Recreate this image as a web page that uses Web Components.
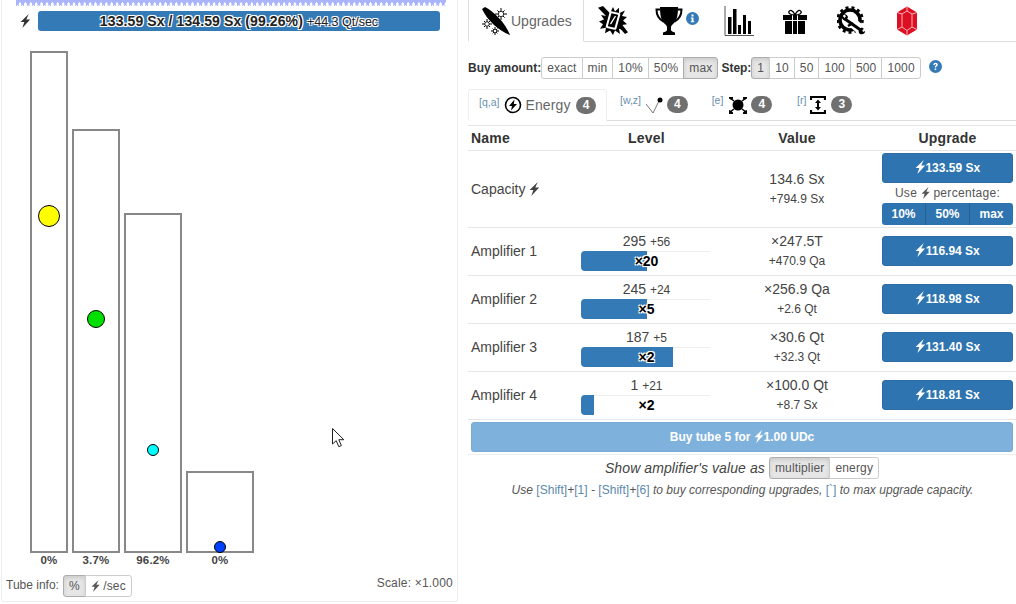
<!DOCTYPE html>
<html>
<head>
<meta charset="utf-8">
<style>
  html, body { margin: 0; height: 100%; background: #fff; overflow: hidden; }
  body { font-family: "Liberation Sans", Arial, sans-serif; font-size: 14px; color: #333; }
  #app { display: flex; width: 1016px; height: 604px; }
</style>
</head>
<body>
<div id="app">
  <tube-panel></tube-panel>
  <upgrade-panel></upgrade-panel>
</div>

<script>
const BOLT = (size = 12, color = 'currentColor') =>
  `<svg width="${size * 0.75}" height="${size}" viewBox="0 0 9 12" style="vertical-align:-2px"><path fill="${color}" d="M7.5 0 .5 6.8h3.2L2 12l6.700-7.200H5.400z"/></svg>`;

const SPARK = (x, y, r) =>
  `<path d="M${x} ${y - r}V${y + r}M${x - r} ${y}H${x + r}M${x - r * .6} ${y - r * .6}L${x + r * .6} ${y + r * .6}M${x + r * .6} ${y - r * .6}L${x - r * .6} ${y + r * .6}" stroke="#000" stroke-width="1" fill="none"/><circle cx="${x}" cy="${y}" r="${r * .45}" fill="#fff" stroke="#000" stroke-width=".8"/>`;

const ICONS = {
  upgrades: `<svg width="30" height="30" viewBox="0 0 30 30"><path d="M1 3 4 1c8 4 20 15 25 28C18 25 6 14 1 3z"/>${SPARK(20, 8, 6)}${SPARK(6, 18, 5)}${SPARK(14, 25, 4)}</svg>`,
  challenges: `<svg width="30" height="29" viewBox="0 0 30 32" preserveAspectRatio="none"><path d="M15 1l2 5 4-4 0 6 6-3-3 6 5 1-4 4 4 4-5 1 3 6-6-2 1 6-5-4-2 5-3-5-5 3 1-6-6 1 3-5-4-3 5-2-3-5 5 1-1-6 5 3z"/><path d="M0 2l8 9 4-3-7-8zM20 22l7 9 3-2-7-10z"/><rect x="9.500" y="6.500" width="11" height="19" rx="1.500" transform="rotate(14 15 16)" fill="#fff"/><rect x="11.500" y="8.500" width="7" height="15" transform="rotate(14 15 16)"/><path d="M12.500 20l5-9" stroke="#fff" stroke-width="1.300"/></svg>`,
  trophy: `<svg width="28" height="30" viewBox="0 0 28 30"><path d="M5 1h18c0 8-1 14-5 17-1 1-2 2-2 3v3c0 1 2 2 4 2.500V29H8v-2.500c2-.5 4-1.500 4-2.500v-3c0-1-1-2-2-3C6 15 5 9 5 1z"/><path d="M5 3.500H1.500c0 6 3 10 7 12M23 3.500h3.500c0 6-3 10-7 12" fill="none" stroke="#000" stroke-width="2"/></svg>`,
  stats: `<svg width="30" height="30" viewBox="0 0 30 30"><path d="M1 0v29.500h29" fill="none" stroke="#555" stroke-width="1"/><path d="M4 11h3.500v17H4zM9 3h3.500v25H9zM14 19h3v9h-3zM19 9h3v19h-3zM24 15h3v13h-3z"/></svg>`,
  gift: `<svg width="24" height="25" viewBox="0 0 24 25" style="margin-top:2px"><path d="M0 6h24v5H0zM2 12h20v13H2z"/><path d="M9.500 6v19M14.500 6v19" stroke="#fff" stroke-width="1"/><path d="M12 6C8 6 5 4.500 6 2.500s4-1.500 6 3.500c2-5 5-5.500 6-3.500S16 6 12 6z" fill="none" stroke="#000" stroke-width="1.300"/></svg>`,
  settings: `<svg width="30" height="30" viewBox="0 0 30 30"><circle cx="13" cy="14" r="10" fill="none" stroke="#000" stroke-width="3.500"/><circle cx="13" cy="14" r="12.500" fill="none" stroke="#000" stroke-width="2.600" stroke-dasharray="3 3"/><path d="M16 17 30 29" stroke="#fff" stroke-width="10"/><path d="M8 13 25 25" stroke="#000" stroke-width="3"/><path d="M5 9c-1 3 1 6 4 5.500l2-3C11 9 8 7.500 6.500 8l2.500 2-1.500 2z"/><path d="M22 27c-1-3 0-5 3-5.500l2 1.500-2 1 1 2 2-1c.5 2-2 4-5 3z"/><path d="M11 20 16 17" stroke="#000" stroke-width="2.500"/></svg>`,
  gem: `<svg width="24" height="30" viewBox="0 0 24 30"><path fill="#dd0f22" d="M12 .5 22 6.500v17L12 29.500 2 23.500v-17z"/><path fill="none" stroke="#f7b0b6" stroke-width="1" d="M12 .5v4.500M7 8l5-3 5 3v13l-5 3.500L7 21zM2 6.500 7 8M22 6.500 17 8M2 23.500 7 21M22 23.500 17 21M12 24.500v5"/></svg>`,
  energy: `<svg width="18" height="18" viewBox="0 0 18 18"><circle cx="9" cy="9" r="7.500" fill="none" stroke="#000" stroke-width="1.600"/><path d="M10.500 3.500 5 10h3l-1 4.500L13 8h-3.200z"/></svg>`,
  amp: `<svg width="17" height="18" viewBox="0 0 17 18"><path d="M0 8l7 9 6-12" fill="none" stroke="#555" stroke-width=".8"/><circle cx="14" cy="4" r="2.500"/></svg>`,
  core: `<svg width="20" height="18" viewBox="0 0 20 18"><circle cx="10" cy="9" r="5.500"/><path d="M1 1h4v1.500L3.500 4 1 2.500zM15 1h4v1.500L16.500 4 15 2.500zM1 14l2.500 1 1.500 1.500V18H1zM16.500 15l2.500-1v4h-4v-1.500z"/><path d="M2 2l4 3M18 2l-4 3M2 16l4-3M18 16l-4-3" stroke="#000" stroke-width="1.500"/></svg>`,
  height: `<svg width="16" height="18" viewBox="0 0 16 18"><path d="M1 4V1h14v3M1 14v3h14v-3" fill="none" stroke="#000" stroke-width="2.200"/><path d="M8 3.500l3 3.500H9v4h2l-3 3.500L5 11h2V7H5z"/></svg>`,
  help: `<svg width="13" height="13" viewBox="0 0 13 13"><circle cx="6.500" cy="6.500" r="6.500" fill="#337ab7"/><path d="M4.300 5c0-1.500 1-2.200 2.300-2.200s2.200.8 2.200 1.900c0 1.500-1.700 1.500-1.700 2.700H5.700c0-1.800 1.500-1.800 1.500-2.600 0-.4-.3-.7-.7-.7s-.8.300-.8.900zM5.700 8.500h1.500V10H5.700z" fill="#fff"/></svg>`,
  info: `<svg width="13" height="13" viewBox="0 0 13 13"><circle cx="6.500" cy="6.500" r="6.500" fill="#337ab7"/><path d="M5.500 2.500h2v2h-2zM4.800 5.500h2.700V9.300h.8v1H4.800v-1h.8V6.500h-.8z" fill="#fff"/></svg>`,
  cursor: `<svg width="14" height="20" viewBox="0 0 14 20"><path d="M.5.500v15.500l3.700-3.300 2.600 6 2.600-1.100-2.600-5.900h5z" fill="#fff" stroke="#222" stroke-width="1"/></svg>`
};

const HALO = '-1px -1px 0 #fff, 1px -1px 0 #fff, -1px 1px 0 #fff, 1px 1px 0 #fff, 0 0 2px #fff';

// segmented button group, used for buy amount, step, tube info and so on
const groupTemplate = document.createElement('template');
groupTemplate.innerHTML = `
<style>
  :host { display: inline-flex; vertical-align: middle; font-size: 12px; font-weight: normal; color: #555; letter-spacing: .15px; }
  ::slotted(*) {
    display: block;
    padding: 1px 5px;
    height: 18px;
    line-height: 18px;
    background: #fff;
    border: 1px solid #ccc;
    margin-left: -1px;
  }
  ::slotted(:first-child) { margin-left: 0; border-radius: 3px 0 0 3px; }
  ::slotted(:last-child) { border-radius: 0 3px 3px 0; }
  ::slotted(.on) { background: #e6e6e6; border-color: #adadad; box-shadow: inset 0 2px 4px rgba(0,0,0,.12); }
</style>
<slot></slot>`;
class BtnGroup extends HTMLElement {
  connectedCallback() {
    if (this.shadowRoot) return;
    this.attachShadow({ mode: 'open' }).appendChild(groupTemplate.content.cloneNode(true));
  }
}
customElements.define('btn-group', BtnGroup);

const tubeTemplate = document.createElement('template');
tubeTemplate.innerHTML = `
<style>
  :host { display: flex; flex-direction: column; align-items: center; }
  .box { box-sizing: border-box; width: 100%; border: 2px solid #888; background: #fff; position: relative; }
  .dot { position: absolute; left: 50%; border-radius: 50%; border: 1px solid #000; box-sizing: border-box; transform: translate(-50%, 50%); }
  .pct { font-size: 11.5px; font-weight: bold; color: #444; line-height: 14px; letter-spacing: .2px; }
</style>
<div class="box"><div class="dot"></div></div>
<div class="pct"></div>`;
class TubeCol extends HTMLElement {
  connectedCallback() {
    if (this.shadowRoot) return;
    this.attachShadow({ mode: 'open' }).appendChild(tubeTemplate.content.cloneNode(true));
    const $ = (s) => this.shadowRoot.querySelector(s);
    this.style.width = this.getAttribute('w') + 'px';
    $('.box').style.height = this.getAttribute('h') + 'px';
    const dot = $('.dot');
    const d = this.getAttribute('d') + 'px';
    dot.style.width = d;
    dot.style.height = d;
    dot.style.bottom = this.getAttribute('level') + 'px';
    dot.style.background = this.getAttribute('color');
    $('.pct').textContent = this.getAttribute('pct');
  }
}
customElements.define('tube-col', TubeCol);

const panelTemplate = document.createElement('template');
panelTemplate.innerHTML = `
<style>
  :host {
    display: flex;
    flex-direction: column;
    position: relative;
    box-sizing: border-box;
    width: 457px;
    height: 602px;
    border: 1px solid #eee;
    border-top: 0;
    border-radius: 0 0 3px 3px;
    margin-left: 1px;
    flex: none;
  }
  .cursor { position: absolute; left: 330px; top: 428px; }
  .cursor svg { display: block; }
  .wave {
    height: 7px;
    margin: 0 11px 0 14px;
    background:
      linear-gradient(135deg, #a9b4fb 50%, transparent 50%) 0 0 / 2.700px 7px repeat-x,
      linear-gradient(225deg, #a9b4fb 50%, transparent 50%) 2.700px 0 / 2.700px 7px repeat-x;
    background-size: 5.400px 7px;
  }
  .bar-row { display: flex; align-items: center; margin-top: 4px; padding: 0 17px 0 18px; height: 20px; }
  .bolt { width: 18px; flex: none; display: flex; color: #333; }
  .bar {
    flex: 1; height: 20px; background: #337ab7; border-radius: 3px;
    text-align: center; line-height: 21px; color: #222;
    font-size: 14px; font-weight: bold; letter-spacing: .1px;
    text-shadow: ${HALO};
  }
  .bar small { font-size: 12.5px; font-weight: normal; letter-spacing: 0; }
  .tubes { display: flex; align-items: flex-end; gap: 4px; padding-left: 28px; margin-top: 20px; }
  .foot { display: flex; align-items: flex-start; justify-content: space-between; padding: 8px 4px 0 4px; font-size: 12px; color: #555; }
  .foot .l { display: flex; align-items: center; gap: 4px; }
  .foot .l span.t { padding-bottom: 3px; }
  .foot .scale { letter-spacing: .2px; line-height: 16px; }
</style>
<div class="wave"></div>
<div class="bar-row">
  <span class="bolt">${BOLT(14)}</span>
  <div class="bar">133.59 Sx / 134.59 Sx (99.26%) <small>+44.3 Qt/sec</small></div>
</div>
<div class="tubes">
  <tube-col w="38" h="502" level="335" d="22" color="#ffff00" pct="0%"></tube-col>
  <tube-col w="48" h="424" level="232" d="18" color="#00e000" pct="3.7%"></tube-col>
  <tube-col w="58" h="340" level="101" d="12" color="#00ffff" pct="96.2%"></tube-col>
  <tube-col w="68" h="82" level="4" d="12" color="#0040ff" pct="0%"></tube-col>
</div>
<div class="foot">
  <div class="l"><span class="t">Tube info:</span>
    <btn-group><span class="on">%</span><span>${BOLT(12)} /sec</span></btn-group>
  </div>
  <div class="scale">Scale: ×1.000</div>
</div>
<div class="cursor">${ICONS.cursor}</div>`;
class TubePanel extends HTMLElement {
  connectedCallback() {
    if (this.shadowRoot) return;
    this.attachShadow({ mode: 'open' }).appendChild(panelTemplate.content.cloneNode(true));
  }
}
customElements.define('tube-panel', TubePanel);

const rowTemplate = document.createElement('template');
rowTemplate.innerHTML = `
<style>
  :host {
    display: grid;
    grid-template-columns: 110px 131px 170px 131px;
    height: 46px;
    padding-bottom: 1px;
    border-top: 1px solid #e6e6e6;
    padding-left: 3px;
    align-items: center;
    color: #444;
  }
  .level { text-align: center; line-height: 18px; font-size: 14px; margin-bottom: -1px; }
  .level small { font-size: 12px; }
  .track { position: relative; height: 20px; width: 131px; background: linear-gradient(#eee, #eee) 0 0 / 100% 1px no-repeat; border-radius: 4px; }
  .fill { position: absolute; left: 0; top: 0; bottom: 0; background: #337ab7; border-radius: 4px 0 0 4px; }
  .mult { position: absolute; inset: 0; text-align: center; line-height: 20px; font-weight: bold; font-size: 14px; color: #000; text-shadow: ${HALO}; }
  .value { text-align: center; font-size: 14px; line-height: 20px; color: #444; }
  .value small { display: block; font-size: 12px; line-height: 20px; }
  .buy { height: 30px; background: #2e74b0; border: 1px solid #2e6da4; box-sizing: border-box; border-radius: 3px; color: #fff; font-weight: bold; font-size: 12px; text-align: center; line-height: 28px; }
</style>
<div class="name"></div>
<div class="level"><div><span class="lv"></span> <small class="add"></small></div><div class="track"><div class="fill"></div><div class="mult"></div></div></div>
<div class="value"><span class="val"></span><small class="vadd"></small></div>
<div class="buy">${BOLT(14, '#fff')}<span class="cost"></span></div>`;
class AmpRow extends HTMLElement {
  connectedCallback() {
    if (this.shadowRoot) return;
    this.attachShadow({ mode: 'open' }).appendChild(rowTemplate.content.cloneNode(true));
    const $ = (s) => this.shadowRoot.querySelector(s);
    const a = (k) => this.getAttribute(k);
    $('.name').textContent = a('name');
    $('.lv').textContent = a('lv');
    $('.add').textContent = a('add');
    $('.fill').style.width = a('fill') + 'px';
    $('.mult').textContent = a('mult');
    $('.val').textContent = a('val');
    $('.vadd').textContent = a('vadd');
    $('.cost').textContent = a('cost');
  }
}
customElements.define('amp-row', AmpRow);

const upgradeTemplate = document.createElement('template');
upgradeTemplate.innerHTML = `
<style>
  :host { display: block; width: 548px; margin-left: 10px; flex: none; color: #444; }
  svg { display: block; flex: none; }
  .main-tabs { display: flex; height: 41px; border-bottom: 1px solid #ddd; align-items: center; }
  .main-tabs .active {
    display: flex; align-items: center; box-sizing: border-box; height: 42px; width: 116px;
    padding-left: 12px; margin-bottom: -1px;
    border: 1px solid #ddd; border-top: 0; border-bottom-color: #fff; background: #fff; color: #666;
  }
  .main-tabs .ico { display: flex; justify-content: center; align-items: center; }
  .info { align-self: flex-start; margin: 12px 0 0 3px; }
  .amount { display: flex; align-items: center; height: 22px; margin-top: 15px; font-size: 12px; font-weight: bold; letter-spacing: -.02px; }
  .amount b { color: #333; }
  .sub-tabs { display: flex; height: 32px; margin-top: 9px; margin-bottom: 4px; border-bottom: 1px solid #ddd; }
  .sub { display: flex; align-items: center; color: #666; box-sizing: border-box; height: 33px; }
  .sub.active { margin-top: 1px; height: 32px; border: 1px solid #eee; border-bottom-color: #fff; border-radius: 3px 3px 0 0; width: 139px; padding-left: 10px; }
  .key { font-size: 10.5px; line-height: 11px; color: #6a8fae; align-self: flex-start; margin-top: 7px; margin-right: 5px; }
  .badge { display: inline-block; background: #707070; color: #fff; border-radius: 10px; font-size: 12px; font-weight: bold; padding: 0 7px; height: 17px; line-height: 17px; }
  .head { display: grid; grid-template-columns: 110px 131px 170px 131px; padding-left: 3px; height: 24px; line-height: 25px; font-weight: bold; color: #333; letter-spacing: .2px; border-top: 1px solid #e6e6e6; }
  .head .c { text-align: center; }
  .cap {
    display: grid; grid-template-columns: 110px 131px 170px 131px; padding-left: 3px; height: 76px; align-items: center;
    border-top: 1px solid #e6e6e6; color: #444;
  }
  .cap .value { text-align: center; line-height: 20px; }
  .cap .value small { display: block; font-size: 12px; line-height: 20px; }
  .buy { height: 30px; background: #2e74b0; border: 1px solid #2e6da4; box-sizing: border-box; border-radius: 3px; color: #fff; font-weight: bold; font-size: 12px; text-align: center; line-height: 28px; }
  .buy svg, .tube svg, .use svg, .name svg { display: inline-block; }
  .use { text-align: center; font-size: 12px; line-height: 20px; letter-spacing: .3px; color: #555; }
  .mini { display: flex; height: 22px; border-radius: 3px; overflow: hidden; background: #2e74b0; color: #fff; font-size: 12px; font-weight: bold; text-align: center; line-height: 22px; }
  .mini span { flex: 1; border-left: 1px solid #286090; }
  .mini span:first-child { border-left: 0; }
  .end { border-top: 1px solid #e6e6e6; padding-top: 2px; }
  .tube { margin-left: 3px; width: 542px; height: 30px; box-sizing: border-box; background: #7fb1dd; border: 1px solid #79aad6; border-radius: 3px; color: #fff; text-align: center; font-size: 12px; font-weight: bold; line-height: 28px; }
  .show { display: flex; align-items: center; justify-content: center; gap: 4px; margin-top: 2px; border-top: 1px solid #eee; padding-top: 2px; font-style: italic; letter-spacing: .1px; }
  .show btn-group { font-style: normal; }
  .hint { text-align: center; font-style: italic; font-size: 12px; line-height: 14px; margin-top: 4px; color: #555; letter-spacing: .02px; padding-left: 1px; }
  .hint i { color: #5b88ad; font-style: normal; }
</style>
<div class="main-tabs">
  <div class="active">${ICONS.upgrades}<span>Upgrades</span></div>
  <div class="ico" style="margin-left:14px">${ICONS.challenges}</div>
  <div class="ico" style="margin-left:27px">${ICONS.trophy}</div>
  <div class="info">${ICONS.info}</div>
  <div class="ico" style="margin-left:25px">${ICONS.stats}</div>
  <div class="ico" style="margin-left:29px">${ICONS.gift}</div>
  <div class="ico" style="margin-left:30px">${ICONS.settings}</div>
  <div class="ico" style="margin-left:28px">${ICONS.gem}</div>
</div>
<div class="amount">
  <b>Buy amount:</b>
  <btn-group><span>exact</span><span>min</span><span>10%</span><span>50%</span><span class="on">max</span></btn-group>
  <b style="margin-left:3px">Step:</b>
  <btn-group style="margin-left:0"><span class="on">1</span><span>10</span><span>50</span><span>100</span><span>500</span><span>1000</span></btn-group>
  <span style="margin:-3px 0 0 8px">${ICONS.help}</span>
</div>
<div class="sub-tabs">
  <div class="sub active"><span class="key">[q,a]</span>${ICONS.energy}<span style="margin:0 5px 0 3px;letter-spacing:.15px">Energy</span><span class="badge">4</span></div>
  <div class="sub" style="margin-left:13px"><span class="key">[w,z]</span>${ICONS.amp}<span class="badge" style="margin-left:4px">4</span></div>
  <div class="sub" style="margin-left:24px"><span class="key">[e]</span>${ICONS.core}<span class="badge" style="margin-left:3px">4</span></div>
  <div class="sub" style="margin-left:25px"><span class="key" style="margin-right:4px">[r]</span>${ICONS.height}<span class="badge" style="margin-left:5px">3</span></div>
</div>
<div class="head"><span>Name</span><span class="c">Level</span><span class="c">Value</span><span class="c">Upgrade</span></div>
<div class="cap">
  <div class="name">Capacity ${BOLT(14)}</div>
  <div></div>
  <div class="value">134.6 Sx<small>+794.9 Sx</small></div>
  <div>
    <div class="buy">${BOLT(14, '#fff')}133.59 Sx</div>
    <div class="use">Use ${BOLT(12)} percentage:</div>
    <div class="mini"><span>10%</span><span>50%</span><span>max</span></div>
  </div>
</div>
<amp-row name="Amplifier 1" lv="295" add="+56" fill="66" mult="×20" val="×247.5T" vadd="+470.9 Qa" cost="116.94 Sx"></amp-row>
<amp-row name="Amplifier 2" lv="245" add="+24" fill="66" mult="×5" val="×256.9 Qa" vadd="+2.6 Qt" cost="118.98 Sx"></amp-row>
<amp-row name="Amplifier 3" lv="187" add="+5" fill="92" mult="×2" val="×30.6 Qt" vadd="+32.3 Qt" cost="131.40 Sx"></amp-row>
<amp-row name="Amplifier 4" lv="1" add="+21" fill="13" mult="×2" val="×100.0 Qt" vadd="+8.7 Sx" cost="118.81 Sx"></amp-row>
<div class="end"><div class="tube">Buy tube 5 for ${BOLT(13, '#fff')}1.00 UDc</div></div>
<div class="show">Show amplifier's value as <btn-group><span class="on">multiplier</span><span>energy</span></btn-group></div>
<div class="hint">Use <i>[Shift]</i>+<i>[1]</i> - <i>[Shift]</i>+<i>[6]</i> to buy corresponding upgrades, <i>[\`]</i> to max upgrade capacity.</div>`;
class UpgradePanel extends HTMLElement {
  connectedCallback() {
    if (this.shadowRoot) return;
    this.attachShadow({ mode: 'open' }).appendChild(upgradeTemplate.content.cloneNode(true));
  }
}
customElements.define('upgrade-panel', UpgradePanel);
</script>
</body>
</html>
